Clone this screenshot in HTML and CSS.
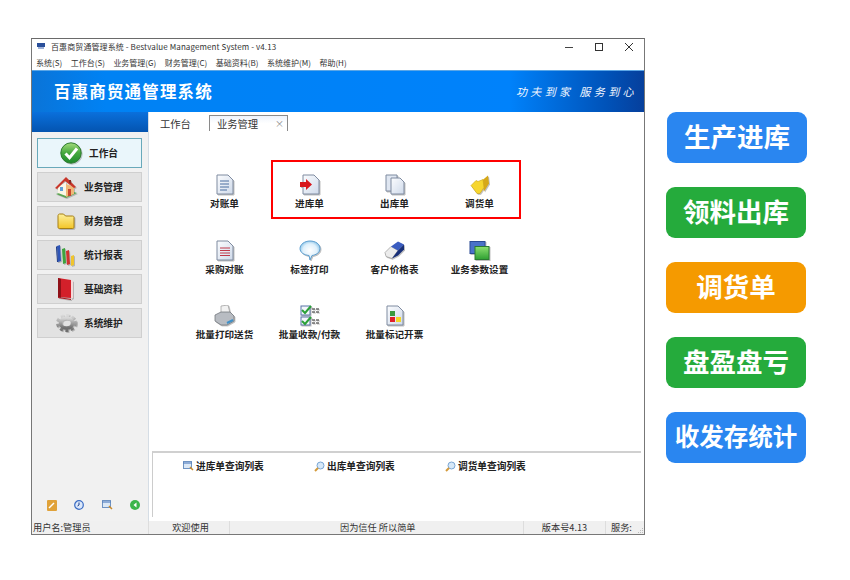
FILE: index.html
```html
<!DOCTYPE html>
<html lang="zh">
<head>
<meta charset="utf-8">
<title>百惠商贸通管理系统</title>
<link rel="stylesheet" href="styles.css">
</head>
<body>
<div class="page">
  <div class="window">
    <div class="titlebar">
      <svg class="app-icon" width="8" height="6" viewBox="0 0 8 6"><rect width="8" height="4" fill="#2a4f9a"/><rect x="1" y="4" width="6" height="2" fill="#9fb2d8"/></svg>
      <span class="title-text">百惠商贸通管理系统 - Bestvalue Management System - v4.13</span>
      <div class="win-controls">
        <svg width="10" height="10" viewBox="0 0 10 10"><path d="M1 5.500h8" stroke="#444" stroke-width="1"/></svg>
        <svg width="10" height="10" viewBox="0 0 10 10"><rect x="1.500" y="1.500" width="7" height="7" fill="none" stroke="#333" stroke-width="1"/></svg>
        <svg width="10" height="10" viewBox="0 0 10 10"><path d="M1 1l8 8M9 1l-8 8" stroke="#333" stroke-width="1"/></svg>
      </div>
    </div>
    <div class="menubar">
      <span>系统(S)</span><span>工作台(S)</span><span>业务管理(G)</span><span>财务管理(C)</span><span>基础资料(B)</span><span>系统维护(M)</span><span>帮助(H)</span>
    </div>
    <div class="banner">
      <span class="brand">百惠商贸通管理系统</span>
      <span class="slogan">功夫到家 服务到心</span>
    </div>
    <div class="main">
      <aside class="sidebar">
        <div class="side-head"></div>
        <nav class="side-nav">
          <div class="side-btn active">
            <div class="side-ico"><svg width="22" height="22" viewBox="0 0 22 22"><defs><linearGradient id="g1" x1="0" y1="0" x2="0" y2="1"><stop offset="0" stop-color="#a4dc7c"/><stop offset=".5" stop-color="#45a83e"/><stop offset="1" stop-color="#1e8a2c"/></linearGradient></defs><circle cx="11" cy="11" r="10.200" fill="url(#g1)" stroke="#2c7a2e"/><path d="M5.500 11.500l4 4.200L17 6.500" fill="none" stroke="#fff" stroke-width="3"/></svg></div>
            <span>工作台</span>
          </div>
          <div class="side-btn">
            <div class="side-ico"><svg width="22" height="21" viewBox="0 0 22 21"><path d="M1 17l10 4 11-5-9-3z" fill="#5aa552"/><path d="M3 10l8-5v14l-8-3z" fill="#fbf6e6"/><path d="M11 7l8 3v7l-8 3z" fill="#f0b878"/><path d="M0 11L11 0l10 10-2 1-9-7-8 8z" fill="#c9362a"/><path d="M14 3h2v4l-2-1z" fill="#8a2a20"/><rect x="13" y="12" width="3" height="7" fill="#c8452f"/><rect x="5" y="10" width="3" height="4" fill="#5f9fd8"/></svg></div>
            <span>业务管理</span>
          </div>
          <div class="side-btn">
            <div class="side-ico"><svg width="18" height="16" viewBox="0 0 18 16"><defs><linearGradient id="g2" x1="0" y1="0" x2="0" y2="1"><stop offset="0" stop-color="#fdf09a"/><stop offset="1" stop-color="#f3c528"/></linearGradient></defs><path d="M1 3c0-1 .5-2 1.500-2h4l2 2h7c1 0 1.500 .5 1.500 1.500V14c0 1-.5 1.500-1.500 1.500h-13C1.500 15.500 1 15 1 14z" fill="url(#g2)" stroke="#a67f14"/></svg></div>
            <span>财务管理</span>
          </div>
          <div class="side-btn">
            <div class="side-ico"><svg width="20" height="21" viewBox="0 0 20 21"><path d="M1 1l3-1 1 16-3 1z" fill="#2e55b8"/><path d="M1 1l1 16H1L0 2z" fill="#183684"/><path d="M6 4l3-1 1 15-3 1z" fill="#3da33d"/><path d="M10 6l3-1 1 14-3 1z" fill="#d0322e"/><path d="M15 11l3-1v10l-3 1z" fill="#f0c52e"/></svg></div>
            <span>统计报表</span>
          </div>
          <div class="side-btn">
            <div class="side-ico"><svg width="18" height="22" viewBox="0 0 18 22"><path d="M1 0l13 2v18L1 19z" fill="#d3202a"/><path d="M14 2l2 1v17l-2 1z" fill="#f6d8d8"/><path d="M1 0l3 1v19l-3-1z" fill="#8f1118"/><path d="M1 19l13 2v1L1 20z" fill="#a8141c"/></svg></div>
            <span>基础资料</span>
          </div>
          <div class="side-btn">
            <div class="side-ico"><svg width="21" height="18" viewBox="0 0 21 18"><defs><linearGradient id="g3" x1="0" y1="0" x2="0" y2="1"><stop offset="0" stop-color="#d8d8d8"/><stop offset="1" stop-color="#6e6e6e"/></linearGradient></defs><ellipse cx="10.500" cy="9" rx="9" ry="7.500" fill="none" stroke="url(#g3)" stroke-width="3" stroke-dasharray="3 2.500"/><ellipse cx="10.500" cy="9" rx="6" ry="5" fill="none" stroke="url(#g3)" stroke-width="3.500"/></svg></div>
            <span>系统维护</span>
          </div>
        </nav>
        <div class="side-tools">
          <svg width="10" height="11" viewBox="0 0 10 11"><rect width="10" height="11" rx="1" fill="#e0a23a"/><path d="M2 8l5-5" stroke="#fff" stroke-width="1.500"/></svg>
          <svg width="10" height="10" viewBox="0 0 10 10"><circle cx="5" cy="5" r="4.300" fill="#dce8fa" stroke="#3a6cc4" stroke-width="1.200"/><path d="M5 2.500V5l-1.500 1" fill="none" stroke="#1d3f8a"/></svg>
          <svg width="11" height="10" viewBox="0 0 11 10"><rect x=".5" y=".5" width="8" height="7" fill="#dbe8f6" stroke="#6f93c2"/><path d="M.5 2h8" stroke="#3f6fb8"/><path d="M7 6l3 3" stroke="#c98a2a" stroke-width="1.500"/></svg>
          <svg width="10" height="10" viewBox="0 0 10 10"><circle cx="5" cy="5" r="5" fill="#3bb54a"/><path d="M6.500 2.500L3.500 5l3 2.500z" fill="#fff"/></svg>
        </div>
      </aside>
      <section class="content">
        <div class="tabs">
          <span class="tab">工作台</span>
          <span class="tab current">业务管理<i>×</i></span>
        </div>
        <div class="icon-area">
          <div class="icon-grid">
            <div class="tile">
              <svg width="18" height="21" viewBox="0 0 18 21"><defs><linearGradient id="doc" x1="0" y1="0" x2="1" y2="1"><stop offset="0" stop-color="#fbfcfe"/><stop offset="1" stop-color="#cfdaea"/></linearGradient></defs><path d="M1 1h11l5 5v14H1z" fill="url(#doc)" stroke="#7f8ba0"/><path d="M4 7h9M4 10h9M4 13h9M4 16h7" stroke="#4a6ea0"/></svg>
              <span>对账单</span>
            </div>
            <div class="tile">
              <svg width="21" height="21" viewBox="0 0 21 21"><path d="M4 1h11l5 5v14H4z" fill="url(#doc)" stroke="#7f8ba0"/><path d="M1 8h6V5l6 5.500L7 16v-3H1z" fill="#d8171d"/></svg>
              <span>进库单</span>
            </div>
            <div class="tile">
              <svg width="20" height="21" viewBox="0 0 20 21"><path d="M1 1h11v16H1z" fill="#dfe6f1" stroke="#7f8ba0"/><path d="M6 4h9l4 4v12H6z" fill="url(#doc)" stroke="#7f8ba0"/></svg>
              <span>出库单</span>
            </div>
            <div class="tile">
              <svg width="20" height="20" viewBox="0 0 20 20"><path d="M12 6l6-5 1 8-5 8z" fill="#d6a818"/><path d="M1 11l5-5 2 1 5-2 1 8-4 6H7z" fill="#f6d62e" stroke="#c9a21a" stroke-width=".6"/></svg>
              <span>调货单</span>
            </div>
            <div class="tile">
              <svg width="18" height="21" viewBox="0 0 18 21"><path d="M1 1h11l5 5v14H1z" fill="url(#doc)" stroke="#7f8ba0"/><path d="M4 8h10M4 10.500h10M4 13h10M4 15.500h10" stroke="#c0384a"/></svg>
              <span>采购对账</span>
            </div>
            <div class="tile">
              <svg width="22" height="21" viewBox="0 0 22 21"><defs><radialGradient id="bub"><stop offset="0" stop-color="#fff"/><stop offset=".7" stop-color="#dff0fb"/><stop offset="1" stop-color="#9ccdec"/></radialGradient></defs><path d="M11 1c5.500 0 10 3 10 7.500S16.500 15 13 15.500L11 20l-1-4.500C5 15 1 12.500 1 8.500S5.500 1 11 1z" fill="url(#bub)" stroke="#5c9ed0"/></svg>
              <span>标签打印</span>
            </div>
            <div class="tile">
              <svg width="21" height="18" viewBox="0 0 21 18"><path d="M1 11l6-6 7 4-6 8-6-2z" fill="#ececec" stroke="#8a8a8a" stroke-width=".6"/><path d="M7 5l7-5 6 3-6 6z" fill="#3a5cc0"/><path d="M14 9l6-6v5l-6 6-6 3z" fill="#182f78"/></svg>
              <span>客户价格表</span>
            </div>
            <div class="tile">
              <svg width="21" height="20" viewBox="0 0 21 20"><defs><linearGradient id="win2" x1="0" y1="0" x2="0" y2="1"><stop offset="0" stop-color="#8de070"/><stop offset="1" stop-color="#2ea032"/></linearGradient></defs><rect x="1" y="1" width="15" height="12" fill="#4a72c8" stroke="#2a4a94"/><rect x="6" y="6" width="14" height="13" fill="url(#win2)" stroke="#2a7a30"/></svg>
              <span>业务参数设置</span>
            </div>
            <div class="tile">
              <svg width="21" height="21" viewBox="0 0 21 21"><path d="M7 1l7-1 2 8-9 1z" fill="#f2f2f2" stroke="#999" stroke-width=".7"/><path d="M1 10l6-3h9l4 4v5l-7 4H7l-6-4z" fill="#b8bcc2" stroke="#74787f" stroke-width=".8"/><path d="M13 18l6-3" stroke="#3e90c8" stroke-width="2"/></svg>
              <span>批量打印送货</span>
            </div>
            <div class="tile">
              <svg width="20" height="21" viewBox="0 0 20 21"><rect x="1" y="1" width="9" height="9" fill="#f3f6fb" stroke="#5874a8"/><rect x="1" y="12" width="9" height="8" fill="#f3f6fb" stroke="#5874a8"/><path d="M2 5l3 3 6-7M2 16l3 3 6-7" fill="none" stroke="#2aa138" stroke-width="2"/><path d="M12 4h7M12 7h7M12 15h7M12 18h7" stroke="#222" stroke-dasharray="3 1"/></svg>
              <span>批量收款/付款</span>
            </div>
            <div class="tile">
              <svg width="18" height="21" viewBox="0 0 18 21"><path d="M1 1h11l5 5v14H1z" fill="url(#doc)" stroke="#7f8ba0"/><rect x="4" y="6" width="5" height="5" fill="#3a9a3e"/><rect x="4" y="12" width="5" height="5" fill="#e0202a"/><rect x="10" y="12" width="5" height="5" fill="#f4d628"/></svg>
              <span>批量标记开票</span>
            </div>
          </div>
          <div class="highlight"></div>
        </div>
        <div class="query-panel">
          <div class="query"><svg width="11" height="10" viewBox="0 0 11 10"><rect x=".5" y=".5" width="8" height="7" fill="#dbe8f6" stroke="#6f93c2"/><path d="M.5 2h8" stroke="#3f6fb8"/><path d="M7 6l3 3" stroke="#c98a2a" stroke-width="1.500"/></svg><span>进库单查询列表</span></div>
          <div class="query"><svg width="11" height="11" viewBox="0 0 11 11"><circle cx="6.500" cy="4.500" r="3.500" fill="#d6e8f8" stroke="#7aa6d4"/><path d="M4 7L1 10" stroke="#d49a3a" stroke-width="2"/></svg><span>出库单查询列表</span></div>
          <div class="query"><svg width="11" height="11" viewBox="0 0 11 11"><circle cx="6.500" cy="4.500" r="3.500" fill="#d6e8f8" stroke="#7aa6d4"/><path d="M4 7L1 10" stroke="#d49a3a" stroke-width="2"/></svg><span>调货单查询列表</span></div>
        </div>
      </section>
    </div>
    <footer class="statusbar">
      <span class="st-user">用户名:管理员</span>
      <span class="st-welcome">欢迎使用</span>
      <span class="st-motto">因为信任 所以简单</span>
      <span class="st-ver">版本号4.13</span>
      <span class="st-srv">服务:</span>
      <svg class="grip" width="6" height="6" viewBox="0 0 6 6"><path d="M5 1h1v1H5zM3 3h1v1H3zM5 3h1v1H5zM1 5h1v1H1zM3 5h1v1H3zM5 5h1v1H5z" fill="#bbb"/></svg>
    </footer>
  </div>
  <div class="actions">
    <div class="action blue shift">生产进库</div>
    <div class="action green">领料出库</div>
    <div class="action orange">调货单</div>
    <div class="action green">盘盈盘亏</div>
    <div class="action blue small">收发存统计</div>
  </div>
</div>
</body>
</html>
```
FILE: styles.css
```css
* { box-sizing: border-box; }
html, body { margin: 0; height: 100%; background: #fff; }
body { font-family: "Noto Sans CJK SC", "Liberation Sans", sans-serif; color: #222; overflow: hidden; }

.page { width: 850px; height: 580px; padding: 38px 0 0 31px; display: flex; align-items: flex-start; }

.window { width: 614px; height: 497px; border: 1px solid #777; border-top-color: #6a6a6a; display: flex; flex-direction: column; background: #fff; flex: none; }

.titlebar { height: 16px; display: flex; align-items: center; padding: 0 0 2px 5px; font-size: 8px; color: #333; flex: none; }
.app-icon { margin-right: 6px; }
.title-text { font-size: 8px; letter-spacing: .1px; white-space: nowrap; }
.win-controls { margin-left: auto; display: flex; gap: 20px; padding-right: 10px; padding-top: 2px; }

.menubar { height: 15px; display: flex; align-items: center; gap: 8.500px; padding-left: 4px; font-size: 8px; color: #333; white-space: nowrap; flex: none; }

.banner { height: 42px; flex: none; display: flex; align-items: center; justify-content: space-between; padding: 0 7px 2px 22px; color: #fff; background: linear-gradient(90deg, #0a74d8 0, #0082f4 12%, #0082fb 78%, #0052b8 94%, #063f9c 100%); border-top: 1px solid #5ba6e6; }
.brand { font-size: 16.500px; font-weight: 700; letter-spacing: 1.150px; }
.slogan { font-size: 11px; font-style: italic; letter-spacing: 3.400px; color: #f2f7ff; }

.main { flex: 1; display: flex; min-height: 0; }

.sidebar { width: 117px; flex: none; display: flex; flex-direction: column; background: #f1f1f1; border-right: 1px solid #d5dde5; }
.side-head { height: 20px; flex: none; background: linear-gradient(180deg, #0a70dc, #0454b0); }
.side-nav { padding: 6px 6px 0 5px; display: flex; flex-direction: column; gap: 4px; }
.side-btn { height: 30px; border: 1px solid #cfcfcf; background: #e2e2e2; display: flex; align-items: center; gap: 6px; padding-left: 16px; font-size: 9.700px; font-weight: 700; color: #222; }
.side-ico { width: 24px; flex: none; display: flex; justify-content: center; align-items: center; }
.side-ico svg { filter: drop-shadow(1px 1px .5px rgba(0,0,0,.2)); }
.side-btn.active { background: #eaf6fb; border-color: #69a9ba; padding-left: 21px; }
.side-tools { margin-top: auto; display: flex; justify-content: space-between; padding: 0 8px 10px 15px; }

.content { flex: 1; display: flex; flex-direction: column; min-width: 0; position: relative; }
.tabs { display: flex; align-items: flex-end; height: 19px; padding: 0 0 0 11px; gap: 18px; font-size: 10.300px; flex: none; color: #333; }
.tab { line-height: 15px; }
.tab.current { width: 79px; height: 16px; border: 1px solid #8a8a8a; border-bottom: 0; padding-left: 7px; display: flex; justify-content: space-between; align-items: center; background: linear-gradient(180deg, #eef3fb, #fff 50%); }
.tab.current i { font-style: normal; color: #888; font-size: 9px; padding-right: 3px; }

.icon-area { height: 320px; flex: none; position: relative; padding: 43px 0 0 33px; }
.icon-grid { display: grid; grid-template-columns: repeat(4, 85px); grid-auto-rows: 65.500px; }
.tile { display: flex; flex-direction: column; align-items: center; gap: 1px; font-size: 9.600px; font-weight: 700; color: #222; white-space: nowrap; }
.tile svg { height: 21px; flex: none; filter: drop-shadow(1px 1px .5px rgba(0,0,0,.25)); }
.tile span { line-height: 14px; }
.highlight { position: absolute; left: 122px; top: 29px; width: 250px; height: 59px; border: 2px solid #f00; }

.query-panel { height: 66px; flex: none; margin: 0 3px 0 3px; border-top: 2px solid #d0d0d0; border-left: 1px solid #ccc; display: flex; padding: 6px 0 0 30px; }
.query { display: flex; align-items: center; gap: 2px; font-size: 9.700px; font-weight: 700; height: 14px; width: 131px; white-space: nowrap; }

.statusbar { height: 13px; flex: none; background: #f0f0f0; display: flex; font-size: 9.200px; line-height: 13px; color: #333; white-space: nowrap; overflow: hidden; }
.statusbar span { display: block; }
.st-user { width: 117px; padding-left: 1px; border-right: 1px solid #ddd; }
.st-welcome { width: 81px; text-align: center; padding-left: 3px; border-right: 1px solid #ddd; }
.st-motto { width: 294px; padding-left: 110px; border-right: 1px solid #ddd; }
.st-ver { width: 82px; text-align: center; border-right: 1px solid #ddd; }
.st-srv { padding-left: 5px; }
.grip { margin: auto 1px 1px auto; }

.actions { flex: none; margin: 74px 0 0 21px; display: flex; flex-direction: column; gap: 24px; }
.action { width: 140px; height: 51px; border-radius: 9px; padding-bottom: 4px; color: #fff; font-size: 26.500px; font-weight: 700; display: flex; align-items: center; justify-content: center; white-space: nowrap; }
.action.shift { transform: translateX(1px); }
.action.small { font-size: 24.500px; }
.blue { background: #2a86f0; }
.green { background: #25ab3c; }
.orange { background: #f59a00; }
```
